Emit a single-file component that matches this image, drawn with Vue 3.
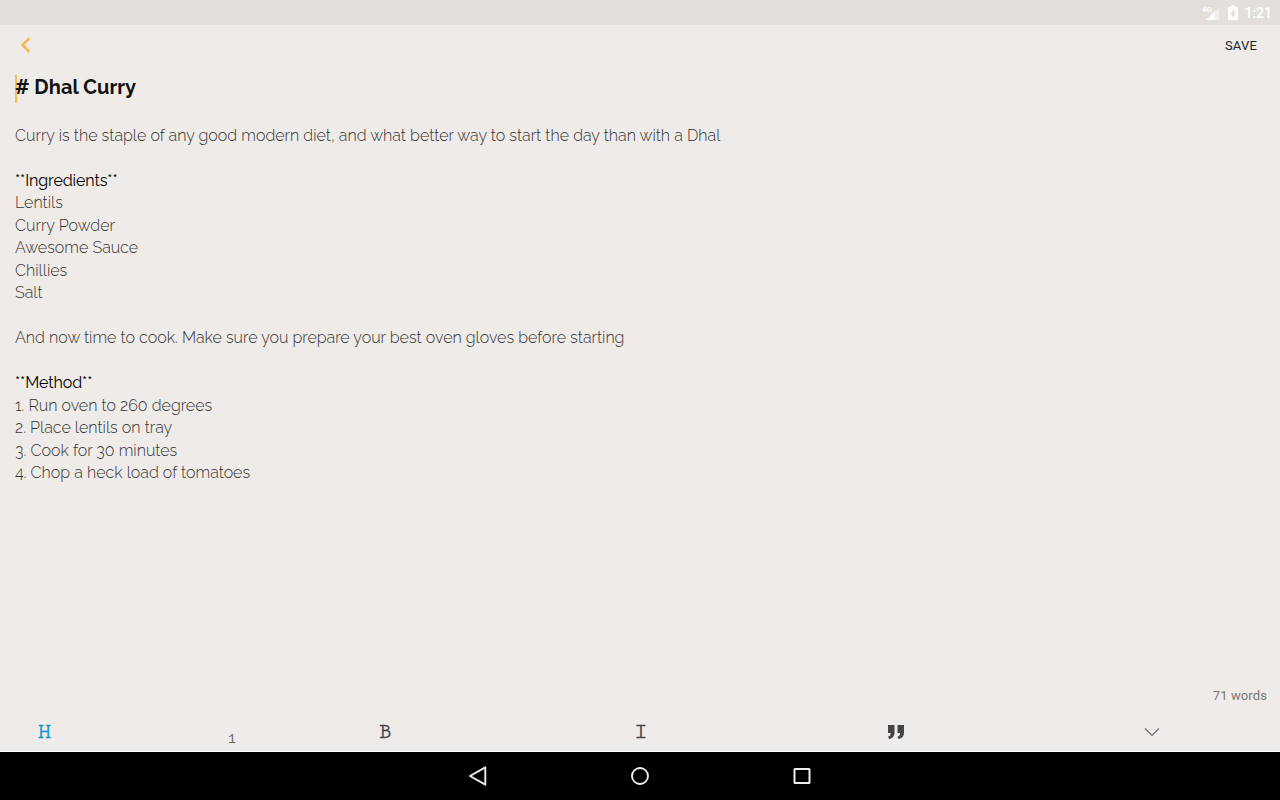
<template>
  <div class="screen">
    <header class="status-bar">
      <svg class="signal" width="18" height="16" viewBox="0 0 18 16">
        <path d="M17.500 2v13H4z" fill="#fff" fill-opacity="0.4" />
        <path d="M13 6.500V15H4z" fill="#fff" />
        <text x="0" y="7" font-size="8" font-weight="700" fill="#fff">4G</text>
      </svg>
      <svg class="battery" width="10" height="16" viewBox="0 0 10 16">
        <path fill="#fff" fill-rule="evenodd" d="M3 .5h4v1.500h2a1 1 0 0 1 1 1V14a1 1 0 0 1-1 1H1a1 1 0 0 1-1-1V3a1 1 0 0 1 1-1h2zM6.200 3.700L1.700 9.500h2.500V13.500L8.300 7.500H6.200z" />
      </svg>
      <span class="clock">1:21</span>
    </header>

    <div class="toolbar">
      <button class="back" aria-label="Back">
        <svg width="12" height="18" viewBox="0 0 12 18">
          <path d="M9.300 2.200L2.500 9l6.800 6.800" fill="none" stroke="#f5b54a" stroke-width="2.400" />
        </svg>
      </button>
      <button class="save">SAVE</button>
    </div>

    <main class="editor">
      <h1 class="title"><span class="caret"></span><span class="title-text"># Dhal Curry</span></h1>
      <p
        v-for="(line, index) in lines"
        :key="index"
        class="line"
        :class="{ strong: line.strong }"
      >{{ line.text }}</p>
    </main>

    <div class="word-count">71 words</div>

    <div class="format-bar">
      <button class="format heading">H</button>
      <span class="level">1</span>
      <button class="format bold">B</button>
      <button class="format italic">I</button>
      <button class="format quote" aria-label="Quote">
        <svg width="18" height="16" viewBox="0 0 18 16">
          <path fill="#444" d="M1 1h6.500v7.500c0 3.500-2 6-5.500 6.500L1 12.800c1.800-.4 2.600-1.600 2.700-3.800H1z" />
          <path fill="#444" d="M10.500 1H17v7.500c0 3.500-2 6-5.500 6.500l-1-2.200c1.800-.4 2.600-1.600 2.700-3.800h-2.700z" />
        </svg>
      </button>
      <button class="format collapse" aria-label="Collapse">
        <svg width="16" height="10" viewBox="0 0 16 10">
          <path d="M1 1.500l7 7 7-7" fill="none" stroke="#666" stroke-width="1.100" />
        </svg>
      </button>
    </div>

    <nav class="nav-bar">
      <svg width="20" height="20" viewBox="0 0 20 20">
        <path d="M17.300 1.300v17.400L2 10z" fill="none" stroke="#eee" stroke-width="1.900" stroke-linejoin="round" />
      </svg>
      <svg width="20" height="20" viewBox="0 0 20 20">
        <circle cx="10" cy="10" r="8" fill="none" stroke="#eee" stroke-width="1.900" />
      </svg>
      <svg width="20" height="20" viewBox="0 0 20 20">
        <rect x="2.500" y="3" width="15" height="14" rx="0.500" fill="none" stroke="#eee" stroke-width="2" />
      </svg>
    </nav>
  </div>
</template>

<script setup>
const lines = [
  { text: 'Curry is the staple of any good modern diet, and what better way to start the day than with a Dhal' },
  { text: '' },
  { text: '**Ingredients**', strong: true },
  { text: 'Lentils' },
  { text: 'Curry Powder' },
  { text: 'Awesome Sauce' },
  { text: 'Chillies' },
  { text: 'Salt' },
  { text: '' },
  { text: 'And now time to cook. Make sure you prepare your best oven gloves before starting' },
  { text: '' },
  { text: '**Method**', strong: true },
  { text: '1. Run oven to 260 degrees' },
  { text: '2. Place lentils on tray' },
  { text: '3. Cook for 30 minutes' },
  { text: '4. Chop a heck load of tomatoes' }
]
</script>

<style>
body {
  margin: 0;
  overflow: hidden;
}
</style>

<style scoped>
.screen {
  width: 1280px;
  height: 800px;
  display: flex;
  flex-direction: column;
  background: #efebe8;
  font-family: Roboto, sans-serif;
}

button {
  padding: 0;
  border: none;
  background: none;
  font: inherit;
  color: inherit;
}

svg {
  display: block;
}

.status-bar {
  height: 25px;
  box-sizing: border-box;
  padding-right: 8px;
  display: flex;
  align-items: center;
  justify-content: flex-end;
  background: #e4dfdb;
  color: #fff;
}

.battery {
  margin: 0 6px 0 8px;
}

.clock {
  font-size: 14px;
  font-weight: 500;
}

.toolbar {
  height: 40px;
  padding: 0 23px 0 20px;
  display: flex;
  align-items: center;
  justify-content: space-between;
}

.save {
  font-size: 13px;
  letter-spacing: 0.2px;
  color: #222;
}

.editor {
  flex: 1;
  padding: 9px 15px 0;
  font-family: Raleway, Lato, sans-serif;
  font-variant-numeric: oldstyle-nums;
  color: #333;
}

.title {
  position: relative;
  margin: 0 0 23.8px;
  height: 27px;
  line-height: 26px;
  font-size: 20px;
  font-weight: 700;
  letter-spacing: 0.07px;
  color: #111;
}

.caret {
  position: absolute;
  left: 0;
  top: 1px;
  width: 2px;
  height: 28px;
  background: #f7bc5c;
}

.title-text {
  position: relative;
}

.line {
  margin: 0;
  height: 22.5px;
  line-height: 22.5px;
  font-size: 16px;
  font-weight: 300;
  letter-spacing: 0.005px;
  white-space: pre;
}

.strong {
  font-weight: 400;
  letter-spacing: -0.07px;
  color: #000;
}

.word-count {
  height: 26px;
  padding-right: 13px;
  text-align: right;
  line-height: 20px;
  font-size: 13px;
  letter-spacing: 0.1px;
  color: #777;
}

.format-bar {
  height: 40px;
  padding-top: 1px;
  box-sizing: border-box;
  display: flex;
  align-items: center;
  border-bottom: 1px solid #fff;
  color: #444;
}

.format {
  width: 256px;
  display: flex;
  justify-content: center;
  font-family: "Cutive Mono", "Courier Prime", "Roboto Slab", "DejaVu Serif Condensed", "DejaVu Serif", serif;
  font-size: 23px;
  line-height: 26px;
  -webkit-text-stroke: 0.5px currentColor;
}

.heading {
  width: 89px;
  color: #0c93d0;
}

.level {
  width: 168px;
  padding: 14px 0 0 139px;
  box-sizing: border-box;
  font-family: "Liberation Mono", monospace;
  font-size: 13px;
  color: #666;
}

.nav-bar {
  height: 48px;
  display: flex;
  align-items: center;
  justify-content: center;
  gap: 142px;
  background: #000;
}
</style>
